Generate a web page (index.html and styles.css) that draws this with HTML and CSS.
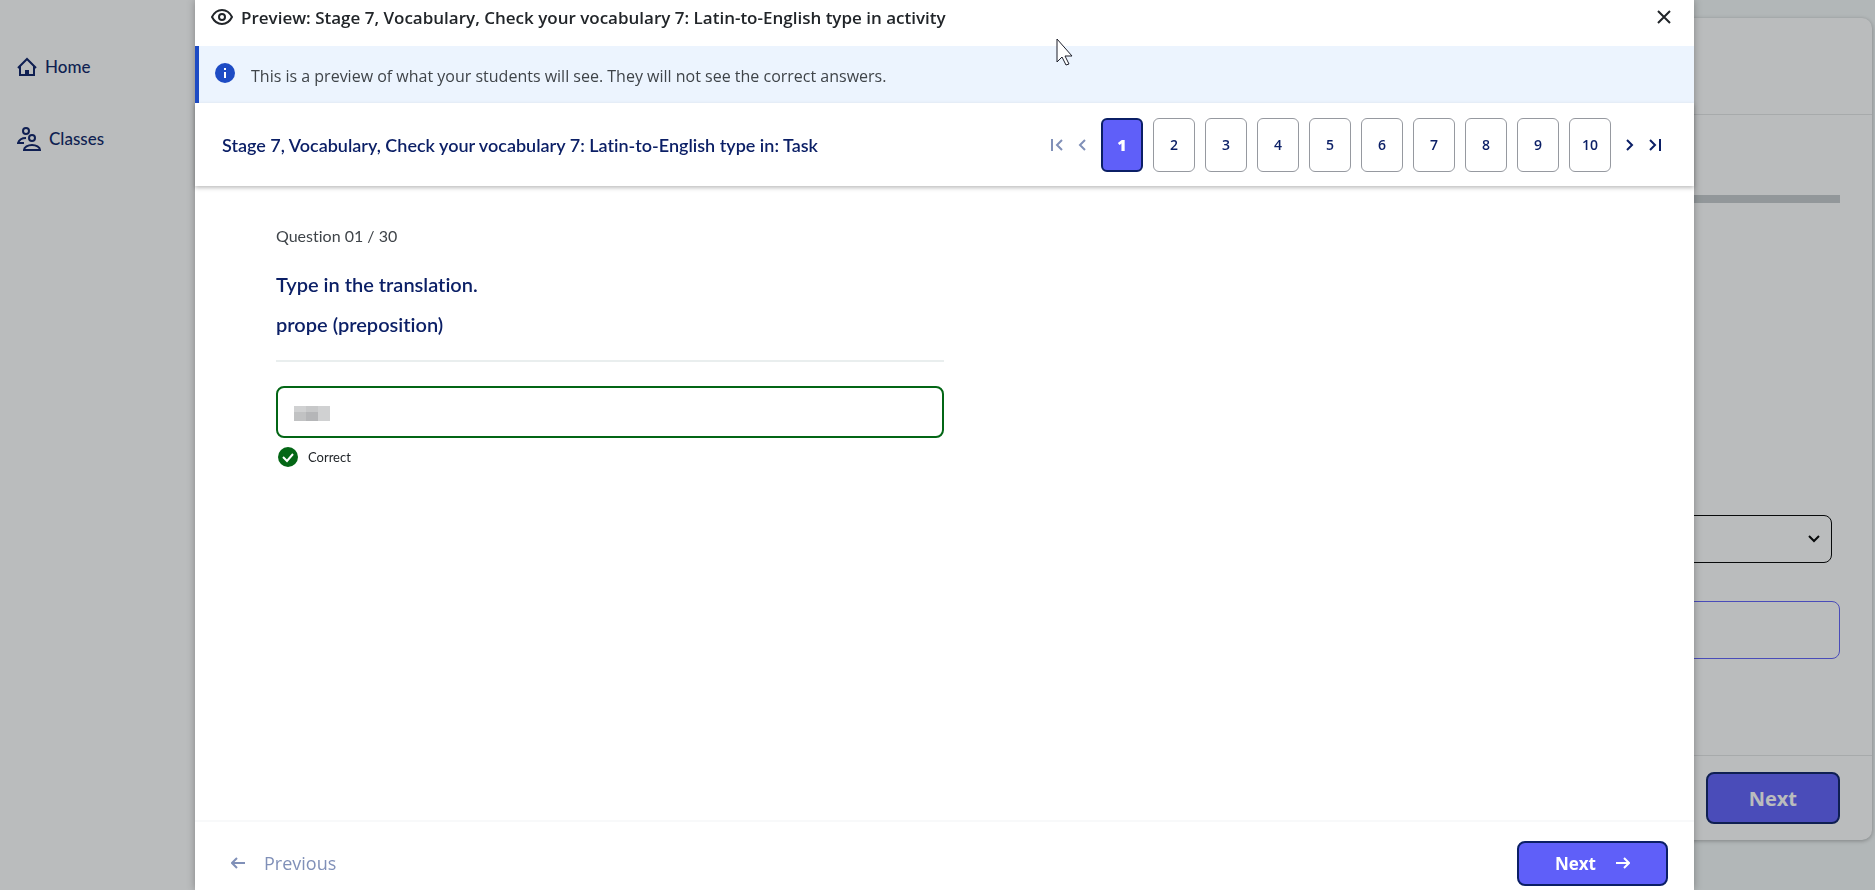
FILE: index.html
```html
<!DOCTYPE html>
<html lang="en">
<head>
    <meta charset="UTF-8">
    <meta name="viewport" content="width=device-width, initial-scale=1.0">
    <title>Preview activity</title>
    <link rel="stylesheet" href="styles.css">
</head>
<body>
    <div class="page">
        <nav class="sidebar">
            <a class="nav-link" href="#">
                <svg width="20" height="20" viewBox="0 0 20 20" fill="none" stroke="currentColor" stroke-width="2">
                    <path d="M1 11 10 2l9 9M3 9v9h14V9"/>
                    <path d="M8 18v-5h4v5z" fill="currentColor" stroke="none"/>
                </svg>
                Home
            </a>
            <a class="nav-link" href="#">
                <svg width="24" height="24" viewBox="0 0 24 24" fill="none" stroke="currentColor" stroke-width="2">
                    <circle cx="9" cy="4" r="3"/>
                    <circle cx="15" cy="11" r="3"/>
                    <path d="M9 11c-4 0-7 2-8 5h6M7 23c0-3 4-5 8-5s8 2 8 5z"/>
                </svg>
                Classes
            </a>
        </nav>
        <main class="main">
            <div class="card">
                <div class="card-header"></div>
                <div class="card-body">
                    <div class="progress"></div>
                    <select class="card-select" aria-label="Activity"></select>
                    <div class="card-box"></div>
                </div>
                <div class="card-footer">
                    <button class="btn btn-large">Next</button>
                </div>
            </div>
        </main>
    </div>

    <div class="overlay">
        <div class="modal" role="dialog" aria-modal="true">
            <header class="modal-header">
                <svg width="22" height="18" viewBox="0 0 22 18" fill="none" stroke="currentColor" stroke-width="2">
                    <path d="M1 9c2-4 5.500-7 10-7s8 3 10 7c-2 4-5.500 7-10 7S3 13 1 9z"/>
                    <circle cx="11" cy="9" r="3"/>
                </svg>
                <h1>Preview: Stage 7, Vocabulary, Check your vocabulary 7: Latin-to-English type in activity</h1>
                <button class="icon-btn" aria-label="Close">
                    <svg width="14" height="14" viewBox="0 0 14 14" fill="none" stroke="currentColor" stroke-width="2">
                        <path d="m1 1 12 12M13 1 1 13"/>
                    </svg>
                </button>
            </header>

            <div class="notice">
                <svg width="20" height="20" viewBox="0 0 20 20">
                    <circle cx="10" cy="10" r="10" fill="#1d4bc4"/>
                    <path d="M9 5h2v2H9zM9 9h2v6H9z" fill="#fff"/>
                </svg>
                <p>This is a preview of what your students will see. They will not see the correct answers.</p>
            </div>

            <div class="task-bar">
                <h2>Stage 7, Vocabulary, Check your vocabulary 7: Latin-to-English type in: Task</h2>
                <nav class="pager" aria-label="Questions">
                    <button class="icon-btn" aria-label="First" disabled>
                        <svg width="12" height="12" viewBox="0 0 12 12" fill="none" stroke="currentColor" stroke-width="2">
                            <path d="M1 0v12M11 1 6 6l5 5"/>
                        </svg>
                    </button>
                    <button class="icon-btn" aria-label="Previous page" disabled>
                        <svg width="8" height="12" viewBox="0 0 8 12" fill="none" stroke="currentColor" stroke-width="2">
                            <path d="M7 1 2 6l5 5"/>
                        </svg>
                    </button>
                    <div class="pages">
                        <button class="page-btn active">1</button>
                        <button class="page-btn">2</button>
                        <button class="page-btn">3</button>
                        <button class="page-btn">4</button>
                        <button class="page-btn">5</button>
                        <button class="page-btn">6</button>
                        <button class="page-btn">7</button>
                        <button class="page-btn">8</button>
                        <button class="page-btn">9</button>
                        <button class="page-btn">10</button>
                    </div>
                    <button class="icon-btn" aria-label="Next page">
                        <svg width="8" height="12" viewBox="0 0 8 12" fill="none" stroke="currentColor" stroke-width="2">
                            <path d="m1 1 5 5-5 5"/>
                        </svg>
                    </button>
                    <button class="icon-btn" aria-label="Last">
                        <svg width="12" height="12" viewBox="0 0 12 12" fill="none" stroke="currentColor" stroke-width="2">
                            <path d="m1 1 5 5-5 5M11 0v12"/>
                        </svg>
                    </button>
                </nav>
            </div>

            <div class="question">
                <p class="counter">Question 01 / 30</p>
                <h3>Type in the translation.</h3>
                <h3>prope (preposition)</h3>
                <hr>
                <div class="answer">
                    <svg width="36" height="15" viewBox="0 0 36 15" shape-rendering="crispEdges">
                        <path d="M0 0h36v15H0z" fill="#d0d1d2"/>
                        <path d="M12 0h12v6H12z" fill="#c7c8c9"/>
                        <path d="M0 6h12v9H0z" fill="#c1c2c3"/>
                        <path d="M12 6h12v9H12z" fill="#b5b6b8"/>
                    </svg>
                    <input type="text" aria-label="Translation">
                </div>
                <p class="result">
                    <svg width="20" height="20" viewBox="0 0 20 20" fill="none">
                        <circle cx="10" cy="10" r="10" fill="#036615"/>
                        <path d="m5 10 4 4 6-7" stroke="#fff" stroke-width="2"/>
                    </svg>
                    Correct
                </p>
            </div>

            <footer class="modal-footer">
                <button class="btn-link" disabled>
                    <svg width="14" height="12" viewBox="0 0 14 12" fill="none" stroke="currentColor" stroke-width="2">
                        <path d="M14 6H1M6 1 1 6l5 5"/>
                    </svg>
                    Previous
                </button>
                <button class="btn">
                    Next
                    <svg width="14" height="12" viewBox="0 0 14 12" fill="none" stroke="currentColor" stroke-width="2">
                        <path d="M0 6h13M8 1l5 5-5 5"/>
                    </svg>
                </button>
            </footer>
        </div>
    </div>

    <svg class="cursor" width="17" height="28" viewBox="0 0 17 28" fill="#fff" stroke="#1d1f2b">
        <path d="M1 1v23l5-5 4 8 3-1-4-8h7z"/>
    </svg>
</body>
</html>
```

FILE: styles.css
```css
* {
    box-sizing: border-box;
}

body {
    margin: 0;
    font-family: "Open Sans", sans-serif;
    font-size: 16px;
    font-variant-ligatures: none;
    color: #212529;
    background-color: #f4f8f8;
}

h1, h2, h3, p {
    margin: 0;
}

button, input, select {
    font-family: inherit;
    margin: 0;
}

svg {
    flex: none;
    display: block;
}

.page {
    display: flex;
    height: 100vh;
    overflow: hidden;
}

.sidebar {
    width: 240px;
    padding: 55px 17px;
    background-color: #fff;
    display: flex;
    flex-direction: column;
    gap: 48px;
}

.nav-link {
    display: flex;
    align-items: center;
    gap: 8px;
    line-height: 24px;
    font-family: Lato, sans-serif;
    font-size: 17px;
    font-weight: 500;
    color: #0b1f66;
    text-decoration: none;
}

.main {
    flex: 1;
    padding: 18px 3px 50px 32px;
}

.card {
    height: 100%;
    display: flex;
    flex-direction: column;
    background-color: #fff;
    border-radius: 10px;
    box-shadow: 0 1px 4px rgba(0,0,0,0.3);
}

.card-header {
    height: 97px;
    border-bottom: 1px solid #e4e5e6;
}

.card-body {
    flex: 1;
    padding: 80px 32px;
    display: flex;
    flex-direction: column;
}

.progress {
    height: 8px;
    background-color: #c6cbcd;
}

.card-select {
    height: 48px;
    margin: 312px 8px 38px 0;
    border: 1px solid #000;
    border-radius: 8px;
    color: #000;
    appearance: none;
    background: url("data:image/svg+xml,%3Csvg xmlns='http://www.w3.org/2000/svg' width='12' height='8' fill='none' stroke='black' stroke-width='2'%3E%3Cpath d='m1 1 5 5 5-5'/%3E%3C/svg%3E") no-repeat right 11px center;
}

.card-box {
    height: 58px;
    border: 1px solid #5f5ff9;
    border-radius: 8px;
}

.card-footer {
    padding: 16px 32px;
    display: flex;
    justify-content: flex-end;
    border-top: 1px solid #e4e5e6;
}

.btn {
    display: flex;
    align-items: center;
    justify-content: center;
    gap: 20px;
    height: 45px;
    padding: 0 36px;
    border: 2px solid #0b1f66;
    border-radius: 8px;
    background-color: #5f5ff9;
    color: #fff;
    font-size: 17px;
    font-weight: 700;
    cursor: pointer;
}

.btn-large {
    height: 52px;
    padding: 0 41px;
    font-size: 20px;
}

.overlay {
    position: fixed;
    inset: 0;
    display: flex;
    padding: 0 181px 0 195px;
    background-color: rgba(28,32,35,0.3);
}

.modal {
    flex: 1;
    display: flex;
    flex-direction: column;
    background-color: #fff;
    box-shadow: 0 0 8px rgba(0,0,0,0.3);
}

.modal-header {
    display: flex;
    align-items: center;
    gap: 8px;
    height: 46px;
    padding: 0 23px 12px 16px;
}

.modal-header h1 {
    flex: 1;
    font-size: 17px;
    font-weight: 600;
}

.icon-btn {
    display: flex;
    padding: 0;
    border: none;
    background: none;
    color: inherit;
    cursor: pointer;
}

.icon-btn:disabled,
.btn-link:disabled {
    color: #8090b8;
}

.notice {
    display: flex;
    align-items: flex-start;
    gap: 16px;
    height: 57px;
    padding: 17px 16px;
    border-left: 4px solid #1d4bc4;
    background-color: #ecf4fe;
}

.notice p {
    font-size: 16px;
    line-height: 26px;
    color: #3f4449;
}

.task-bar {
    display: flex;
    align-items: center;
    justify-content: space-between;
    height: 83px;
    padding: 0 33px 0 27px;
    color: #0b1f66;
    background-color: #fff;
    box-shadow: 0 2px 4px rgba(0,0,0,0.25);
}

.task-bar h2 {
    font-family: Lato, sans-serif;
    font-size: 18px;
    font-weight: 600;
}

.pager {
    display: flex;
    align-items: center;
    gap: 15px;
}

.pages {
    display: flex;
    gap: 10px;
}

.page-btn {
    width: 42px;
    height: 54px;
    padding: 0;
    border: 1px solid #9699a0;
    border-radius: 6px;
    background-color: #fff;
    color: #0b1f66;
    font-size: 14px;
    font-weight: 600;
    cursor: pointer;
}

.page-btn.active {
    border: 2px solid #0b1f66;
    background-color: #5f5ff9;
    color: #fff;
    font-size: 16px;
    font-weight: 800;
}

.question {
    flex: 1;
    width: 55%;
    padding: 38px 75px 0 81px;
    font-family: Lato, sans-serif;
}

.counter {
    margin-bottom: 20px;
    font-size: 16px;
    line-height: 24px;
    color: #3f4449;
}

.question h3 {
    font-size: 20px;
    font-weight: 600;
    line-height: 32px;
    margin-bottom: 8px;
    color: #0b1f66;
}

.question hr {
    margin: 20px 0 24px;
    border: none;
    border-top: 2px solid #e9eeee;
}

.answer {
    display: flex;
    align-items: center;
    height: 52px;
    padding: 2px 16px 0;
    border: 2px solid #036615;
    border-radius: 8px;
}

.answer input {
    flex: 1;
    border: none;
    outline: none;
    background: none;
}

.result {
    display: flex;
    align-items: center;
    gap: 10px;
    margin: 9px 2px;
    font-size: 13px;
}

.modal-footer {
    display: flex;
    align-items: center;
    justify-content: space-between;
    height: 70px;
    padding: 14px 26px 0 36px;
    border-top: 2px solid #f8f9fa;
}

.btn-link {
    display: flex;
    align-items: center;
    gap: 19px;
    padding: 0;
    border: none;
    background: none;
    font-size: 18px;
    font-weight: 500;
}

.cursor {
    position: absolute;
    left: 1056px;
    top: 38px;
}
```
